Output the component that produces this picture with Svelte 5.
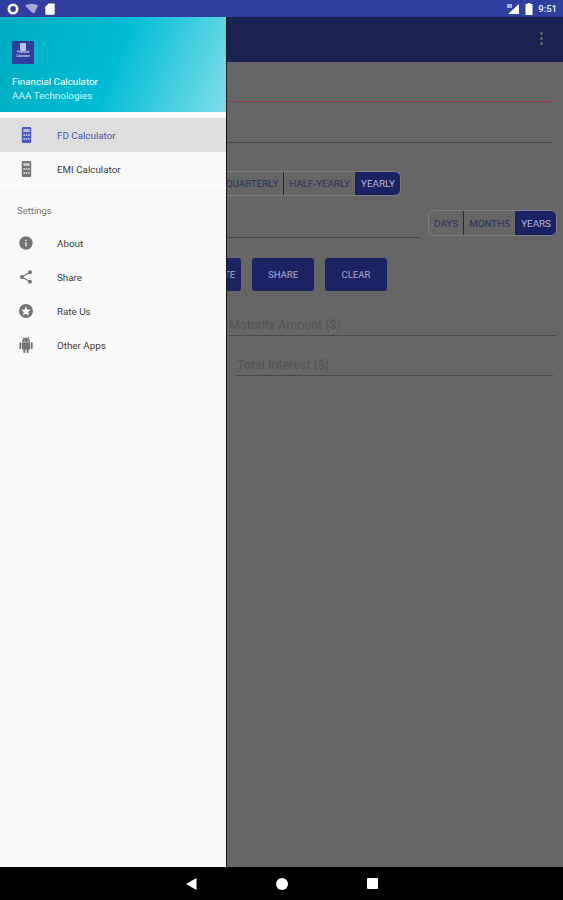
<script lang="ts">
  const PRIMARY = [
    { label: 'FD Calculator', active: true },
    { label: 'EMI Calculator', active: false },
  ];
  const SECONDARY = [
    { label: 'About', icon: 'info' },
    { label: 'Share', icon: 'share' },
    { label: 'Rate Us', icon: 'star' },
    { label: 'Other Apps', icon: 'android' },
  ];
  const FREQ = ['MONTHLY', 'QUARTERLY', 'HALF-YEARLY', 'YEARLY'];
  const UNITS = ['DAYS', 'MONTHS', 'YEARS'];
  const ACTIONS = ['CALCULATE', 'SHARE', 'CLEAR'];
</script>

<div class="screen">
  <div class="status">
    <svg class="st" width="12" height="12" viewBox="0 0 12 12"><circle cx="6" cy="6" r="4.200" fill="none" stroke="#fff" stroke-width="2.600" /></svg>
    <svg class="st" width="13" height="11" viewBox="0 0 13 11"><path d="M0 2.500Q6.500-1 13 2.500L9.500 10H7.500Z" fill="#a4acd4" /></svg>
    <svg class="st sd" width="10" height="12" viewBox="0 0 10 12"><path d="M3.500 0.500H9a.7.7 0 0 1 .7.7V11a.7.7 0 0 1-.7.7H1a.7.7 0 0 1-.7-.7V3.700Z" fill="#fff" /></svg>
    <span class="grow"></span>
    <svg class="st" width="12" height="10" viewBox="0 0 12 10"><path d="M12 0V10H1Z" fill="#fff" /><path d="M0 0H5V4H0Z" fill="#a4acd4" /></svg>
    <svg class="st batt" width="8" height="12" viewBox="0 0 8 12"><path d="M2.500 0H5.500V1H7.500V12H.5V1H2.500Z" fill="#fff" /></svg>
    <span class="clock">9:51</span>
  </div>

  <div class="body">
    <div class="app">
      <div class="toolbar">
        <span class="dots"><i></i><i></i><i></i></span>
      </div>
      <div class="form">
        <div class="field red"></div>
        <div class="field grey"></div>
        <div class="seg freq">
          {#each FREQ as f, i (f)}
            <span class:on={i === FREQ.length - 1}>{f}</span>
          {/each}
        </div>
        <div class="tenure">
          <div class="tenure-input"></div>
          <div class="seg units">
            {#each UNITS as u, i (u)}
              <span class:on={i === UNITS.length - 1}>{u}</span>
            {/each}
          </div>
        </div>
        <div class="actions">
          {#each ACTIONS as a (a)}
            <span class="btn">{a}</span>
          {/each}
        </div>
        <div class="result maturity">Maturity Amount ($)</div>
        <div class="result interest">Total Interest ($)</div>
      </div>
    </div>

    <aside class="drawer">
      <header>
        <div class="logo">
          <svg width="8" height="8" viewBox="0 0 8 8"><rect x="1" y="0" width="6" height="8" rx="1" fill="#b9c0ea" /></svg>
          <span>Financial<br />Calculator</span>
        </div>
        <div class="title">Financial Calculator</div>
        <div class="sub">AAA Technologies</div>
      </header>

      <nav class="group first">
        {#each PRIMARY as p (p.label)}
          <div class="item" class:active={p.active}>
            <svg class="ico" width="11" height="16" viewBox="0 0 14 16" preserveAspectRatio="none">
              <rect x="1" y="0" width="12" height="16" rx="1.500" fill="currentColor" />
              <rect x="3" y="2" width="8" height="3" fill="#fff" opacity=".6" />
              <g fill="#fff" opacity=".6">
                <rect x="3" y="7" width="2" height="2" /><rect x="6" y="7" width="2" height="2" /><rect x="9" y="7" width="2" height="2" />
                <rect x="3" y="11" width="2" height="2" /><rect x="6" y="11" width="2" height="2" /><rect x="9" y="11" width="2" height="2" />
              </g>
            </svg>
            <span>{p.label}</span>
          </div>
        {/each}
      </nav>

      <div class="section">Settings</div>

      <nav class="group">
        {#each SECONDARY as s (s.label)}
          <div class="item">
            <svg class="ico" width="16" height="16" viewBox="0 0 24 24" fill="currentColor">
              {#if s.icon === 'info'}
                <path d="M12 2C6.480 2 2 6.480 2 12s4.480 10 10 10 10-4.480 10-10S17.520 2 12 2zm1 15h-2v-6h2v6zm0-8h-2V7h2v2z" />
              {:else if s.icon === 'share'}
                <path d="M18 16.080c-.76 0-1.440.3-1.960.77L8.910 12.700c.05-.23.09-.46.09-.7s-.04-.47-.09-.7l7.050-4.110c.54.5 1.250.81 2.040.81 1.660 0 3-1.340 3-3s-1.340-3-3-3-3 1.340-3 3c0 .24.04.47.09.7L8.040 9.810C7.500 9.310 6.790 9 6 9c-1.660 0-3 1.340-3 3s1.340 3 3 3c.79 0 1.500-.31 2.040-.81l7.120 4.160c-.05.21-.08.43-.08.65 0 1.610 1.310 2.920 2.920 2.920 1.610 0 2.920-1.310 2.920-2.920s-1.310-2.920-2.920-2.920z" />
              {:else if s.icon === 'star'}
                <path fill-rule="evenodd" d="M12 1.500a10.500 10.500 0 1 0 0 21 10.500 10.500 0 0 0 0-21zM12 5l2.100 4.700 5.100.5-3.800 3.400 1.100 5L12 16l-4.500 2.600 1.100-5-3.800-3.400 5.100-.5z" />
              {:else}
                <path d="M6 18c0 .55.45 1 1 1h1v3.500c0 .83.67 1.500 1.500 1.500s1.500-.67 1.500-1.500V19h2v3.500c0 .83.67 1.500 1.500 1.500s1.500-.67 1.500-1.500V19h1c.55 0 1-.45 1-1V8H6v10zM3.500 8C2.670 8 2 8.670 2 9.500v7c0 .83.67 1.500 1.500 1.500S5 17.330 5 16.500v-7C5 8.670 4.330 8 3.500 8zm17 0c-.83 0-1.500.67-1.500 1.500v7c0 .83.67 1.500 1.500 1.500s1.500-.67 1.500-1.500v-7c0-.83-.67-1.500-1.500-1.500zm-4.970-5.840l1.300-1.300c.2-.2.2-.51 0-.71-.2-.2-.51-.2-.71 0l-1.480 1.480C13.850 1.230 12.950 1 12 1c-.96 0-1.860.23-2.660.63L7.850.15c-.2-.2-.51-.2-.71 0-.2.2-.2.51 0 .71l1.310 1.310C6.970 3.260 6 5.010 6 7h12c0-1.990-.97-3.750-2.470-4.840zM10 5H9V4h1v1zm5 0h-1V4h1v1z" />
              {/if}
            </svg>
            <span>{s.label}</span>
          </div>
        {/each}
      </nav>
    </aside>
  </div>

  <div class="navbar">
    <svg width="11" height="12" viewBox="0 0 11 12"><path d="M10.500 0V12L0 6Z" fill="#fff" /></svg>
    <svg width="12" height="12" viewBox="0 0 12 12"><circle cx="6" cy="6" r="6" fill="#fff" /></svg>
    <svg width="11" height="11" viewBox="0 0 11 11"><rect width="11" height="11" rx="1" fill="#fff" /></svg>
  </div>
</div>

<style>
  :global(body) {
    margin: 0;
    background: #000;
  }
  .screen {
    width: 563px;
    height: 900px;
    display: flex;
    flex-direction: column;
    overflow: hidden;
    font-family: Roboto, 'Liberation Sans', sans-serif;
  }
  .status {
    height: 17px;
    flex: none;
    background: #303f9f;
    display: flex;
    align-items: center;
    gap: 6px;
    padding: 0 6px 0 7px;
    box-sizing: border-box;
  }
  .grow {
    flex: 1;
  }
  .st {
    flex: none;
  }
  .sd {
    margin-left: 1px;
  }
  .batt {
    margin-right: -2px;
  }
  .clock {
    color: #eef0fa;
    font-size: 9.500px;
    font-weight: 500;
    margin-left: 1px;
  }
  .body {
    position: relative;
    flex: 1;
    min-height: 0;
  }
  .app {
    height: 100%;
    background: #666;
  }
  .toolbar {
    height: 45px;
    background: #1a2350;
    display: flex;
    align-items: center;
    justify-content: flex-end;
    padding-right: 20px;
    box-sizing: border-box;
  }
  .dots {
    display: flex;
    flex-direction: column;
    gap: 2px;
    margin-bottom: 2px;
  }
  .dots i {
    width: 3px;
    height: 3px;
    border-radius: 50%;
    background: #666;
  }
  .form {
    display: flex;
    flex-direction: column;
  }
  .field {
    margin-left: 16px;
    margin-right: 10px;
  }
  .field.red {
    height: 39px;
    border-bottom: 1px solid #a03c46;
  }
  .field.grey {
    height: 40px;
    border-bottom: 1px solid #474747;
  }
  .seg {
    display: flex;
    height: 25px;
    box-sizing: border-box;
    border: 1px solid #7c7c84;
    border-radius: 6px;
    overflow: hidden;
    font-size: 9.800px;
    color: #2a3060;
  }
  .seg span {
    display: flex;
    align-items: center;
    justify-content: center;
    padding: 0 5px;
    border-left: 1px solid #1b2266;
  }
  .seg span:first-child {
    border-left: 0;
  }
  .seg span.on {
    background: #1c2364;
    color: #b4b9d8;
  }
  .freq {
    margin: 28px 0 0 120px;
    align-self: flex-start;
    width: 281px;
  }
  .freq span:nth-child(1) {
    flex: 1;
  }
  .tenure {
    display: flex;
    align-items: flex-start;
    margin: 14px 6px 0 16px;
  }
  .tenure-input {
    flex: 1;
    height: 27px;
    border-bottom: 1px solid #474747;
    margin-right: 8px;
  }
  .units {
    height: 26px;
    width: 129px;
  }
  .units span {
    flex: auto;
    padding: 0 4px;
  }
  .actions {
    display: flex;
    justify-content: flex-start;
    gap: 11px;
    margin: 20px 0 0 141px;
  }
  .btn {
    height: 33px;
    width: 62px;
    display: flex;
    align-items: center;
    justify-content: center;
    background: #1c2364;
    color: #8f95b8;
    border-radius: 3px;
    font-size: 9.500px;
    font-weight: 500;
  }
  .btn:first-child {
    width: 100px;
    justify-content: flex-end;
    padding-right: 6px;
    box-sizing: border-box;
  }
  .result {
    font-size: 12.500px;
    color: #535353;
    border-bottom: 1px solid #474747;
    height: 20px;
    line-height: 20px;
    box-sizing: content-box;
  }
  .maturity {
    margin: 24px 7px 0 229px;
  }
  .interest {
    margin: 19px 10px 0 237px;
  }
  .drawer {
    position: absolute;
    left: 0;
    top: 0;
    bottom: 0;
    width: 226px;
    background: #fafafa;
    border-right: 1px solid #141414;
    display: flex;
    flex-direction: column;
  }
  header {
    height: 95px;
    flex: none;
    background: linear-gradient(112deg, #00acc1 0%, #00bcd4 50%, #80deea 100%);
    padding: 24px 12px 0;
    box-sizing: border-box;
    color: #fff;
  }
  .logo {
    width: 22px;
    height: 23px;
    background: #303f9f;
    display: flex;
    flex-direction: column;
    align-items: center;
    padding-top: 2px;
    box-sizing: border-box;
    font-size: 3px;
    line-height: 3.500px;
    text-align: center;
    color: #fff;
  }
  .logo svg {
    flex: none;
  }
  .title {
    font-size: 9.800px;
    margin-top: 11px;
    line-height: 13px;
    white-space: nowrap;
  }
  .sub {
    font-size: 9.900px;
    line-height: 13px;
    margin-top: 1px;
    color: #d6f4f8;
    white-space: nowrap;
  }
  .group {
    display: flex;
    flex-direction: column;
  }
  .group.first {
    padding: 6px 0 4px;
    border-bottom: 1px solid #f0f0f0;
  }
  .item {
    height: 34px;
    display: flex;
    align-items: center;
    font-size: 9.800px;
    color: #3a3a3a;
    padding-left: 18px;
  }
  .item .ico {
    color: #757575;
    flex: none;
    margin-right: 23px;
  }
  .group.first .ico {
    margin-left: 2.500px;
    margin-right: 25.500px;
  }
  .item.active {
    background: #dedede;
    color: #4453b0;
  }
  .item.active .ico {
    color: #4a5ac0;
  }
  .section {
    font-size: 9.500px;
    color: #757575;
    padding-left: 17px;
    margin-top: 13px;
    height: 22px;
    line-height: 14px;
  }
  .navbar {
    height: 33px;
    flex: none;
    background: #000;
    display: flex;
    align-items: center;
    justify-content: center;
    gap: 79px;
  }
</style>
